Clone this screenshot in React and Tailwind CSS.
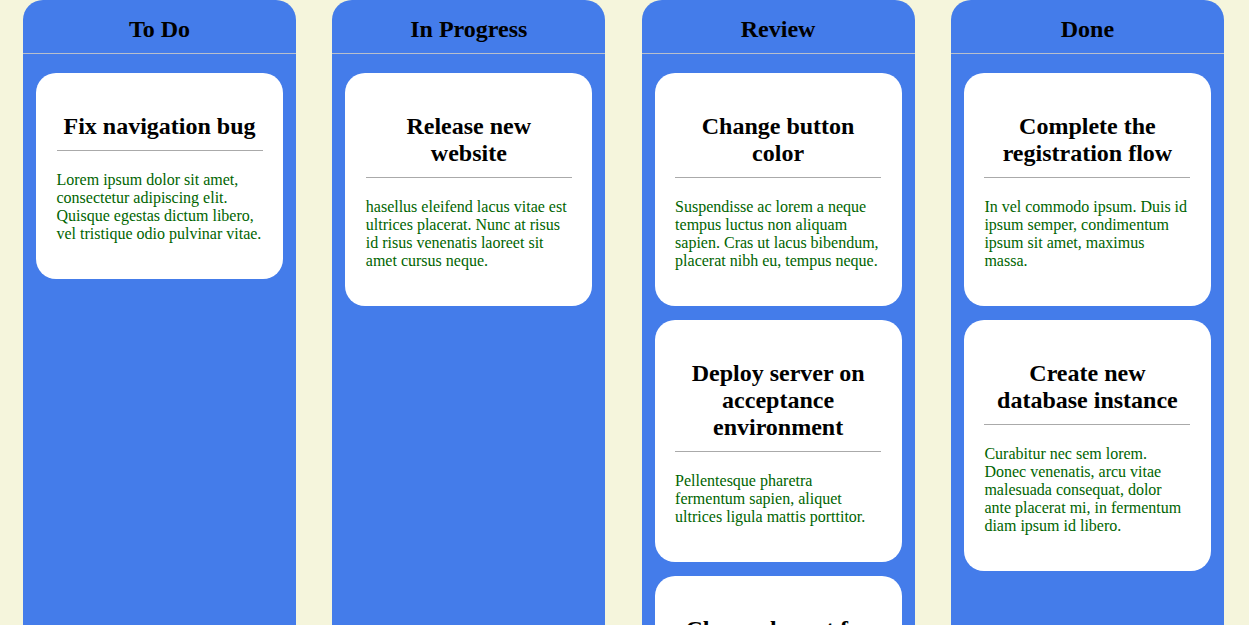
const columns = [
  {
    title: "To Do",
    cards: [
      {
        title: "Fix navigation bug",
        body: "Lorem ipsum dolor sit amet, consectetur adipiscing elit. Quisque egestas dictum libero, vel tristique odio pulvinar vitae.",
      },
    ],
  },
  {
    title: "In Progress",
    cards: [
      {
        title: "Release new website",
        body: "hasellus eleifend lacus vitae est ultrices placerat. Nunc at risus id risus venenatis laoreet sit amet cursus neque.",
      },
    ],
  },
  {
    title: "Review",
    cards: [
      {
        title: "Change button color",
        body: "Suspendisse ac lorem a neque tempus luctus non aliquam sapien. Cras ut lacus bibendum, placerat nibh eu, tempus neque.",
      },
      {
        title: "Deploy server on acceptance environment",
        body: "Pellentesque pharetra fermentum sapien, aliquet ultrices ligula mattis porttitor.",
      },
      {
        title: "Change layout for mobile",
        body: "Nam vitae nibh vel justo fermentum accumsan.",
      },
    ],
  },
  {
    title: "Done",
    cards: [
      {
        title: "Complete the registration flow",
        body: "In vel commodo ipsum. Duis id ipsum semper, condimentum ipsum sit amet, maximus massa.",
      },
      {
        title: "Create new database instance",
        body: "Curabitur nec sem lorem. Donec venenatis, arcu vitae malesuada consequat, dolor ante placerat mi, in fermentum diam ipsum id libero.",
      },
    ],
  },
];

function Card({ title, body }) {
  return (
    <div className="shrink-0 rounded-[20px] bg-white px-[20.5px] py-5">
      <h2 className="mt-5 mb-[10px] text-center text-[24px] font-bold leading-[27px] text-black">
        {title}
      </h2>
      <hr className="border-t border-[#aaaaaa]" />
      <p className="mt-5 mb-4 text-[16px] leading-[18px] text-[#006400]">{body}</p>
    </div>
  );
}

export default function App() {
  return (
    <div
      className="flex h-[625px] items-start gap-[36.3px] overflow-hidden bg-[#f5f5dc] px-[23px]"
      style={{ fontFamily: '"Liberation Serif", "Times New Roman", serif' }}
    >
      {columns.map((col) => (
        <div key={col.title} className="flex min-h-[625px] w-[273px] shrink-0 flex-col rounded-t-[20px] bg-[#447cea]">
          <div className="flex h-[54px] shrink-0 items-center justify-center border-b border-[#b8bfcc]">
            <h2 className="mt-[5px] text-[24px] font-bold leading-[27px] text-black">{col.title}</h2>
          </div>
          <div className="flex flex-col gap-[14px] px-[13px] pt-[19px]">
            {col.cards.map((card) => (
              <Card key={card.title} {...card} />
            ))}
          </div>
        </div>
      ))}
    </div>
  );
}
